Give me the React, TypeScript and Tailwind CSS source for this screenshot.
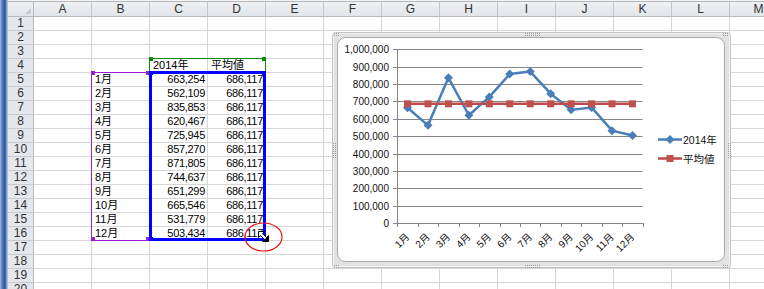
import React from "react";

const COLS = ["A", "B", "C", "D", "E", "F", "G", "H", "I", "J", "K", "L", "M"];
const VALUES = [663254, 562109, 835853, 620467, 725945, 857270, 871805, 744637, 651299, 665546, 531779, 503434];
const AVG = 686117;
const fmt = (n: number) => n.toLocaleString("en-US");

function cellContent(row: number, col: string): { text: string; align: "l" | "r" } | null {
  if (row === 4 && col === "C") return { text: "2014年", align: "l" };
  if (row === 4 && col === "D") return { text: "平均値", align: "l" };
  if (row >= 5 && row <= 16) {
    const i = row - 5;
    if (col === "B") return { text: `${i + 1}月`, align: "l" };
    if (col === "C") return { text: fmt(VALUES[i]), align: "r" };
    if (col === "D") return { text: fmt(AVG), align: "r" };
  }
  return null;
}

function Dots({ x, y, cols, rows }: { x: number; y: number; cols: number; rows: number }) {
  const out: React.ReactNode[] = [];
  for (let i = 0; i < cols; i++)
    for (let j = 0; j < rows; j++)
      out.push(<rect key={`${i}-${j}`} x={x + i * 2} y={y + j * 2} width={1} height={1} fill="#9a9a9a" />);
  return <g>{out}</g>;
}

function Chart() {
  const y0 = 223;
  const k = 173.7 / 1e6;
  const ax = 397.3;
  const step = 20.45;
  const yv = (v: number) => y0 - v * k;
  const cx = (i: number) => ax + step * (i + 0.5);
  const blue = VALUES.map((v, i) => `${cx(i)},${yv(v)}`).join(" ");
  const red = VALUES.map((_, i) => `${cx(i)},${yv(AVG)}`).join(" ");
  const font = "'Liberation Sans','Noto Sans CJK JP',sans-serif";
  const ylabels = ["0", "100,000", "200,000", "300,000", "400,000", "500,000", "600,000", "700,000", "800,000", "900,000", "1,000,000"];
  const right = ax + step * 12;
  return (
    <svg width={399} height={236} viewBox="332 32 399 236" className="block">
      <rect x={332.5} y={32.5} width={398} height={235} rx={3} fill="#e2e2e2" stroke="#c4c4c4" />
      <rect x={333.5} y={33.5} width={396} height={233} rx={2} fill="none" stroke="#f2f2f2" />
      <rect x={337.5} y={37.5} width={387} height={224} rx={8} fill="#ffffff" stroke="#a8a8a8" />
      <Dots x={334} y={33} cols={3} rows={2} />
      <Dots x={525} y={33} cols={8} rows={2} />
      <Dots x={723} y={33} cols={3} rows={2} />
      <Dots x={333} y={143} cols={2} rows={8} />
      <Dots x={728} y={143} cols={2} rows={8} />
      <Dots x={334} y={265} cols={3} rows={2} />
      <Dots x={525} y={265} cols={8} rows={2} />
      <Dots x={723} y={265} cols={3} rows={2} />
      {ylabels.map((lab, i) => {
        const gy = Math.round(y0 - i * 17.37) + 0.5;
        return (
          <g key={lab}>
            <line x1={393} x2={right} y1={gy} y2={gy} stroke="#868686" strokeWidth={1} />
            <text x={389} y={gy + 3.5} textAnchor="end" fontSize={10} fontFamily={font} fill="#111">
              {lab}
            </text>
          </g>
        );
      })}
      <line x1={397.5} x2={397.5} y1={49} y2={224} stroke="#868686" />
      {Array.from({ length: 13 }).map((_, i) => {
        const tx = Math.round(ax + step * i) + 0.5;
        return <line key={i} x1={tx} x2={tx} y1={223} y2={227} stroke="#868686" />;
      })}
      {VALUES.map((_, i) => {
        const x = cx(i) + 2.5;
        const y = 237.5;
        return (
          <text key={i} x={x} y={y} textAnchor="end" fontSize={10} fontFamily={font} fill="#111" transform={`rotate(-45 ${x} ${y})`}>
            {`${i + 1}月`}
          </text>
        );
      })}
      <polyline points={blue} fill="none" stroke="#4a7ebb" strokeWidth={2.5} strokeLinejoin="round" />
      {VALUES.map((v, i) => {
        const x = cx(i);
        const y = yv(v);
        return <polygon key={i} points={`${x},${y - 4.5} ${x + 4.5},${y} ${x},${y + 4.5} ${x - 4.5},${y}`} fill="#4a7ebb" />;
      })}
      <polyline points={red} fill="none" stroke="#be4b48" strokeWidth={2.5} />
      {VALUES.map((_, i) => (
        <rect key={i} x={cx(i) - 3.5} y={yv(AVG) - 3.5} width={7} height={7} fill="#c0504d" />
      ))}
      <line x1={658} x2={682} y1={139.5} y2={139.5} stroke="#4a7ebb" strokeWidth={2.5} />
      <polygon points="670,135 674.5,139.5 670,144 665.5,139.5" fill="#4a7ebb" />
      <text x={683} y={143.5} fontSize={10.5} fontFamily={font} fill="#111">2014年</text>
      <line x1={658} x2={682} y1={158.5} y2={158.5} stroke="#be4b48" strokeWidth={2.5} />
      <rect x={666.5} y={155} width={7} height={7} fill="#c0504d" />
      <text x={683} y={162.5} fontSize={10.5} fontFamily={font} fill="#111">平均値</text>
    </svg>
  );
}

function Handles({ color, top = true, bottom = true }: { color: string; top?: boolean; bottom?: boolean }) {
  return (
    <>
      {top && <div className={`absolute -left-[1px] -top-[2px] w-[4px] h-[4px] ${color}`} />}
      {top && <div className={`absolute -right-[1px] -top-[2px] w-[4px] h-[4px] ${color}`} />}
      {bottom && <div className={`absolute -left-[1px] -bottom-[1px] w-[4px] h-[4px] ${color}`} />}
      {bottom && <div className={`absolute -right-[1px] -bottom-[1px] w-[4px] h-[4px] ${color}`} />}
    </>
  );
}

export default function App() {
  const rows = Array.from({ length: 20 }, (_, i) => i + 1);
  return (
    <div className="relative w-[764px] h-[289px] overflow-hidden bg-white font-['Liberation_Sans','Noto_Sans_CJK_JP',sans-serif] text-[11px] leading-[13px] text-black">
      <div className="flex h-[297px]">
        <div className="w-[8px] shrink-0 bg-[linear-gradient(to_right,#9fbbe3_0%,#5b80c2_25%,#2c4f95_60%,#6f91c9_80%,#c9d6ea_100%)]" />
        <div className="flex flex-col">
          <div className="h-[1px] bg-[#f4f4f4]" />
          <div className="flex h-[16px] border-t border-b border-[#b5b9be] bg-[linear-gradient(to_bottom,#eef0f2,#e2e5e9)]">
            <div className="flex w-[26px] shrink-0 items-end justify-end border-r border-[#b5b9be] p-[2px]">
              <div className="w-0 h-0 border-l-[6px] border-l-transparent border-b-[6px] border-b-[#c8ccd1]" />
            </div>
            {COLS.map((c) => (
              <div key={c} className="w-[58px] shrink-0 border-r border-[#c3c7cc] text-center text-[12px] leading-[14px] text-[#333]">
                {c}
              </div>
            ))}
          </div>
          {rows.map((r) => (
            <div key={r} className="flex h-[14px]">
              <div className="w-[26px] shrink-0 border-r border-b border-r-[#b5b9be] border-b-[#c8ccd1] bg-[#e4e7eb] text-center text-[12px] leading-[13px] text-[#333]">
                {r}
              </div>
              {COLS.map((c) => {
                const cc = cellContent(r, c);
                return (
                  <div
                    key={c}
                    className={`w-[58px] shrink-0 border-r border-b border-[#d6d6d6] overflow-hidden whitespace-nowrap ${
                      cc?.align === "r" ? "text-right pr-[2px] tracking-[-0.3px]" : "text-left pl-[3px]"
                    }`}
                  >
                    {cc?.text}
                  </div>
                );
              })}
            </div>
          ))}
        </div>
      </div>

      {/* selection overlays (range highlights drawn over the grid) */}
      <div className="absolute left-[91px] top-[72px] w-[59px] h-[169px] border border-[#9a1fd0]">
        <Handles color="bg-[#9a1fd0]" />
      </div>
      <div className="absolute left-[149px] top-[58px] w-[117px] h-[15px] border border-[#0a8a0a]">
        <Handles color="bg-[#0a8a0a]" bottom={false} />
      </div>
      <div className="absolute left-[149px] top-[71px] w-[117px] h-[170px] border-[3px] border-[#0000ff]">
        <div className="absolute -left-[3px] -top-[3px] w-[4px] h-[4px] bg-[#0000ff]" />
        <div className="absolute -right-[3px] -top-[3px] w-[4px] h-[4px] bg-[#0000ff]" />
        <div className="absolute -left-[3px] -bottom-[3px] w-[4px] h-[4px] bg-[#0000ff]" />
      </div>

      {/* cursor + red ellipse annotation */}
      <svg className="absolute left-[240px] top-[220px]" width={50} height={36} viewBox="240 220 50 36">
        <rect x={263} y={237} width={5} height={5} fill="#0000ff" />
        <polygon
          points="258.5,231.5 264.5,231.5 262.5,233.5 266.5,237.5 268.5,235.5 268.5,241.5 262.5,241.5 264.5,239.5 260.5,235.5 258.5,237.5"
          fill="#ffffff"
          stroke="#000"
          strokeWidth={1}
        />
        <polygon points="268.5,235.5 268.5,241.5 262.5,241.5" fill="#000" />
        <ellipse cx={263.5} cy={237} rx={18.5} ry={14} fill="none" stroke="#ee1111" strokeWidth={1.2} />
      </svg>

      {/* embedded chart object floating over the sheet */}
      <div className="absolute left-[332px] top-[32px]">
        <Chart />
      </div>
    </div>
  );
}
